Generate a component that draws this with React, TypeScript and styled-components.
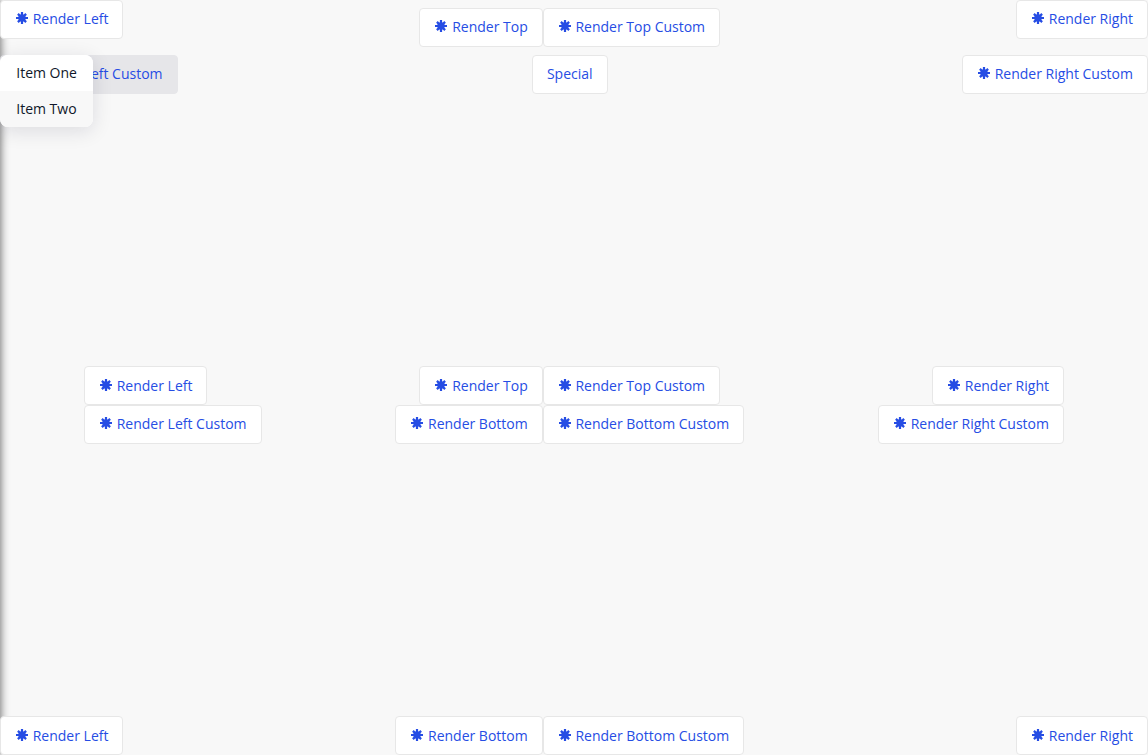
import React from "react";
import styled, { createGlobalStyle } from "styled-components";

const GlobalStyle = createGlobalStyle`
  * { box-sizing: border-box; }
  body { margin: 0; background: #f8f8f8; overflow: hidden; }
`;

const Page = styled.main`
  position: relative;
  display: flex;
  flex-direction: column;
  justify-content: space-between;
  height: 100vh;
  font-family: "Open Sans", sans-serif;
  font-size: 14px;
  background: #f8f8f8;
`;

const DrawerShadow = styled.div`
  position: absolute;
  top: 0;
  bottom: 0;
  left: -10px;
  width: 10px;
  box-shadow: 0 0 10px rgba(0, 0, 0, 0.65);
`;

const Section = styled.section<{ $inset?: number }>`
  position: relative;
  display: flex;
  justify-content: space-between;
  padding: 0 ${(p) => p.$inset ?? 0}px;
`;

const Column = styled.div<{ $align: "flex-start" | "center" | "flex-end"; $spread?: boolean }>`
  display: flex;
  flex-direction: column;
  align-items: ${(p) => p.$align};
  justify-content: ${(p) => (p.$spread ? "space-between" : "flex-start")};
`;

const ButtonRow = styled.div<{ $gap?: number }>`
  display: flex;
  margin: ${(p) => p.$gap ?? 0}px 0;
`;

const Button = styled.button<{ $active?: boolean }>`
  display: flex;
  align-items: center;
  gap: 3.72px;
  height: 38.75px;
  padding: 0 14px;
  border: 1px solid ${(p) => (p.$active ? "#e6e6e9" : "#e7e7e7")};
  border-radius: 4px;
  background: ${(p) => (p.$active ? "#e6e6e9" : "#fff")};
  color: #264de4;
  font: inherit;
  line-height: 18px;
  white-space: nowrap;
`;

const Icon = styled.svg`
  width: 14px;
  height: 14px;
  flex: none;
  margin-bottom: 2px;
`;

const MenuAnchor = styled.div`
  position: relative;
`;

const Menu = styled.ul`
  position: absolute;
  top: 0;
  left: 0;
  margin: 0;
  padding: 0;
  list-style: none;
  border-radius: 8px;
  overflow: hidden;
  background: #fff;
  box-shadow: 0 4px 20px rgba(20, 20, 50, 0.12);
`;

const MenuItem = styled.li<{ $shaded?: boolean }>`
  height: 36px;
  padding: 0 16px 0 16.25px;
  line-height: 36px;
  white-space: nowrap;
  color: #0f172a;
  background: ${(p) => (p.$shaded ? "#f8f8f8" : "#fff")};
`;

function Action({ label, active }: { label: string; active?: boolean }) {
  return (
    <Button $active={active}>
      <Icon viewBox="0 0 14 14" aria-hidden="true">
        <path
          d="M7 1v12M1 7h12M2.9 2.9l8.2 8.2M11.1 2.9l-8.2 8.2"
          stroke="currentColor"
          strokeWidth="2.2"
          fill="none"
        />
        <circle cx="7" cy="7" r="3.7" fill="currentColor" />
      </Icon>
      {label}
    </Button>
  );
}

export default function App() {
  return (
    <>
      <GlobalStyle />
      <Page>
        <DrawerShadow />
        <Section>
          <Column $align="flex-start" $spread>
            <Action label="Render Left" />
            <MenuAnchor>
              <Action label="Render Left Custom" active />
              <Menu>
                <MenuItem>Item One</MenuItem>
                <MenuItem $shaded>Item Two</MenuItem>
              </Menu>
            </MenuAnchor>
          </Column>
          <Column $align="center">
            <ButtonRow $gap={8}>
              <Action label="Render Top" />
              <Action label="Render Top Custom" />
            </ButtonRow>
            <Button>Special</Button>
          </Column>
          <Column $align="flex-end" $spread>
            <Action label="Render Right" />
            <Action label="Render Right Custom" />
          </Column>
        </Section>
        <Section $inset={84}>
          <Column $align="flex-start">
            <Action label="Render Left" />
            <Action label="Render Left Custom" />
          </Column>
          <Column $align="center">
            <ButtonRow>
              <Action label="Render Top" />
              <Action label="Render Top Custom" />
            </ButtonRow>
            <ButtonRow>
              <Action label="Render Bottom" />
              <Action label="Render Bottom Custom" />
            </ButtonRow>
          </Column>
          <Column $align="flex-end">
            <Action label="Render Right" />
            <Action label="Render Right Custom" />
          </Column>
        </Section>
        <Section>
          <Action label="Render Left" />
          <ButtonRow>
            <Action label="Render Bottom" />
            <Action label="Render Bottom Custom" />
          </ButtonRow>
          <Action label="Render Right" />
        </Section>
      </Page>
    </>
  );
}
